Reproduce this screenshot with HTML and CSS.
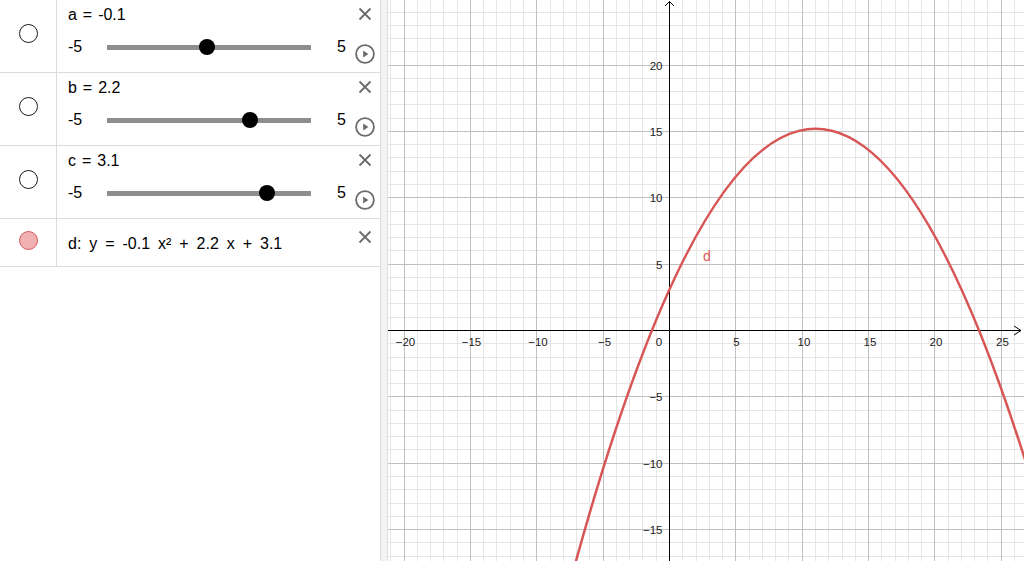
FILE: index.html
```html
<!DOCTYPE html>
<html lang="en">
<head>
<meta charset="utf-8">
<title>Graphing</title>
<link rel="stylesheet" href="styles.css">
</head>
<body>
<div class="app">
  <aside class="algebra">
    <div class="item">
      <div class="marble-cell"><span class="marble"></span></div>
      <div class="item-main">
        <div class="item-name">a = -0.1</div>
        <div class="slider-line">
          <span class="slider-min">-5</span>
          <div class="track"><span class="knob" style="--v:0.49"></span></div>
          <span class="slider-max">5</span>
        </div>
      </div>
      <div class="item-controls">
        <svg class="icon-close" viewBox="0 0 14 14"><path d="M1.5 1.5L12.5 12.5M12.5 1.5L1.5 12.5"/></svg>
        <svg class="icon-play" viewBox="0 0 20 20"><circle cx="10" cy="10" r="8.9"/><path d="M8.2 6.6L13.4 10L8.2 13.4Z"/></svg>
      </div>
    </div>
    <div class="item">
      <div class="marble-cell"><span class="marble"></span></div>
      <div class="item-main">
        <div class="item-name">b = 2.2</div>
        <div class="slider-line">
          <span class="slider-min">-5</span>
          <div class="track"><span class="knob" style="--v:0.72"></span></div>
          <span class="slider-max">5</span>
        </div>
      </div>
      <div class="item-controls">
        <svg class="icon-close" viewBox="0 0 14 14"><path d="M1.5 1.5L12.5 12.5M12.5 1.5L1.5 12.5"/></svg>
        <svg class="icon-play" viewBox="0 0 20 20"><circle cx="10" cy="10" r="8.9"/><path d="M8.2 6.6L13.4 10L8.2 13.4Z"/></svg>
      </div>
    </div>
    <div class="item">
      <div class="marble-cell"><span class="marble"></span></div>
      <div class="item-main">
        <div class="item-name">c = 3.1</div>
        <div class="slider-line">
          <span class="slider-min">-5</span>
          <div class="track"><span class="knob" style="--v:0.81"></span></div>
          <span class="slider-max">5</span>
        </div>
      </div>
      <div class="item-controls">
        <svg class="icon-close" viewBox="0 0 14 14"><path d="M1.5 1.5L12.5 12.5M12.5 1.5L1.5 12.5"/></svg>
        <svg class="icon-play" viewBox="0 0 20 20"><circle cx="10" cy="10" r="8.9"/><path d="M8.2 6.6L13.4 10L8.2 13.4Z"/></svg>
      </div>
    </div>
    <div class="item item-formula">
      <div class="marble-cell"><span class="marble marble-on"></span></div>
      <div class="item-main">
        <div class="formula">d: y = -0.1 x² + 2.2 x + 3.1</div>
      </div>
      <div class="item-controls">
        <svg class="icon-close" viewBox="0 0 14 14"><path d="M1.5 1.5L12.5 12.5M12.5 1.5L1.5 12.5"/></svg>
      </div>
    </div>
  </aside>
  <div class="splitter"></div>
  <main class="graphics">
    <svg class="plot" width="636" height="561" viewBox="388 0 636 561">
      <path class="grid-minor" d="M390.5 0V561M417.5 0V561M430.5 0V561M443.5 0V561M457.5 0V561M483.5 0V561M496.5 0V561M510.5 0V561M523.5 0V561M550.5 0V561M563.5 0V561M576.5 0V561M589.5 0V561M616.5 0V561M629.5 0V561M642.5 0V561M656.5 0V561M682.5 0V561M696.5 0V561M709.5 0V561M722.5 0V561M749.5 0V561M762.5 0V561M775.5 0V561M788.5 0V561M815.5 0V561M828.5 0V561M842.5 0V561M855.5 0V561M881.5 0V561M895.5 0V561M908.5 0V561M921.5 0V561M948.5 0V561M961.5 0V561M974.5 0V561M987.5 0V561M1014.5 0V561
      M388 12.5H1024M388 25.5H1024M388 38.5H1024M388 51.5H1024M388 78.5H1024M388 91.5H1024M388 104.5H1024M388 118.5H1024M388 144.5H1024M388 157.5H1024M388 171.5H1024M388 184.5H1024M388 211.5H1024M388 224.5H1024M388 237.5H1024M388 250.5H1024M388 277.5H1024M388 290.5H1024M388 303.5H1024M388 317.5H1024M388 343.5H1024M388 357.5H1024M388 370.5H1024M388 383.5H1024M388 410.5H1024M388 423.5H1024M388 436.5H1024M388 449.5H1024M388 476.5H1024M388 489.5H1024M388 503.5H1024M388 516.5H1024M388 542.5H1024M388 556.5H1024"/>
      <path class="grid-major" d="M404.5 0V561M470.5 0V561M536.5 0V561M603.5 0V561M735.5 0V561M802.5 0V561M868.5 0V561M934.5 0V561M1001.5 0V561
      M388 65.5H1024M388 131.5H1024M388 197.5H1024M388 264.5H1024M388 396.5H1024M388 463.5H1024M388 529.5H1024"/>
      <path class="axis" d="M388 330.5H1021M1014 326L1021 330.5L1014 335M669.5 561V1.5M665 6L669.5 1.5L674 6"/>
      <g transform="translate(669.5 330.5) scale(13.27 -13.27)">
        <path class="curve" d="M-7.5 -19.025Q9.75 44.8 27 -10.4"/>
      </g>
      <text class="curve-label" x="703" y="261">d</text>
      <g class="xlabels">
        <text x="405.5" y="346">−20</text>
        <text x="471.5" y="346">−15</text>
        <text x="538" y="346">−10</text>
        <text x="604.5" y="346">−5</text>
        <text x="659" y="346">0</text>
        <text x="736.5" y="346">5</text>
        <text x="804" y="346">10</text>
        <text x="870" y="346">15</text>
        <text x="936" y="346">20</text>
        <text x="1002.5" y="346">25</text>
      </g>
      <g class="ylabels">
        <text x="662.5" y="70">20</text>
        <text x="662.5" y="136">15</text>
        <text x="662.5" y="202">10</text>
        <text x="662.5" y="269">5</text>
        <text x="662.5" y="401">−5</text>
        <text x="662.5" y="468">−10</text>
        <text x="662.5" y="534">−15</text>
      </g>
    </svg>
  </main>
</div>
</body>
</html>
```

FILE: styles.css
```css
* { box-sizing: border-box; }

html, body {
  margin: 0;
  padding: 0;
  background: #fff;
}

body {
  font-family: "Liberation Sans", Arial, sans-serif;
  color: #000;
}

.app {
  display: flex;
  width: 1024px;
  height: 561px;
  overflow: hidden;
}

/* ---------- algebra panel ---------- */
.algebra {
  flex: none;
  width: 381px;
  border-right: 1px solid #dcdcdc;
}

.splitter {
  flex: none;
  width: 7px;
  background: #f3f3f3;
  border-right: 1px solid #dcdcdc;
}

.item {
  display: grid;
  grid-template-columns: 57px 1fr 30px;
  height: 73px;
  border-bottom: 1px solid #dcdcdc;
}

.marble-cell {
  border-right: 1px solid #dcdcdc;
  display: flex;
  justify-content: center;
  align-items: flex-start;
  padding-top: 24px;
}

.marble {
  display: block;
  width: 19px;
  height: 19px;
  border-radius: 50%;
  border: 1px solid #1a1a1a;
  background: #fff;
}

.marble-on {
  background: #efb1b1;
  border-color: #d65a5a;
}

.item-main {
  padding: 5px 0 0 11px;
}

.item-name {
  font-size: 16px;
  line-height: 20px;
  word-spacing: 1.5px;
  white-space: nowrap;
}

.slider-line {
  display: flex;
  align-items: center;
  height: 20px;
  margin-top: 12px;
  font-size: 16px;
  line-height: 20px;
}

.slider-min {
  width: 39px;
  flex: none;
}

.track {
  position: relative;
  flex: none;
  width: 204px;
  height: 5px;
  background: #8e8e8e;
}

.knob {
  position: absolute;
  top: 50%;
  left: calc(8px + var(--v) * 188px);
  width: 16px;
  height: 16px;
  border-radius: 50%;
  background: #000;
  transform: translate(-50%, -50%);
}

.slider-max {
  margin-left: 26px;
}

.item-controls {
  display: flex;
  flex-direction: column;
  align-items: center;
  padding-top: 7px;
  gap: 23px;
}

.icon-close {
  width: 14px;
  height: 14px;
  fill: none;
  stroke: #6b6b6b;
  stroke-width: 1.8;
}

.icon-play {
  width: 20px;
  height: 20px;
}

.icon-play circle {
  fill: none;
  stroke: #6b6b6b;
  stroke-width: 1.8;
}

.icon-play path {
  fill: #6b6b6b;
}

.item-formula {
  height: 48px;
}

.item-formula .marble-cell {
  padding-top: 12px;
}

.item-formula .item-main {
  padding-top: 15px;
}

.item-formula .item-controls {
  padding-top: 11px;
}

.formula {
  font-size: 16px;
  line-height: 20px;
  word-spacing: 3.5px;
  white-space: nowrap;
}

/* ---------- graphics view ---------- */
.graphics {
  flex: 1;
  min-width: 0;
  background: #fff;
}

.plot {
  display: block;
  font-family: "Liberation Sans", Arial, sans-serif;
}

.grid-minor {
  fill: none;
  stroke: #e6e6e6;
  stroke-width: 1;
  shape-rendering: crispEdges;
}

.grid-major {
  fill: none;
  stroke: #c0c0c0;
  stroke-width: 1;
  shape-rendering: crispEdges;
}

.axis {
  fill: none;
  stroke: #000;
  stroke-width: 1;
}

.curve {
  fill: none;
  stroke: #d85555;
  stroke-width: 2.5;
  vector-effect: non-scaling-stroke;
}

.curve-label {
  font-size: 14px;
  fill: #d85555;
}

.xlabels text {
  font-size: 11.5px;
  fill: #1a1a1a;
  text-anchor: middle;
}

.ylabels text {
  font-size: 11.5px;
  fill: #1a1a1a;
  text-anchor: end;
}
```
